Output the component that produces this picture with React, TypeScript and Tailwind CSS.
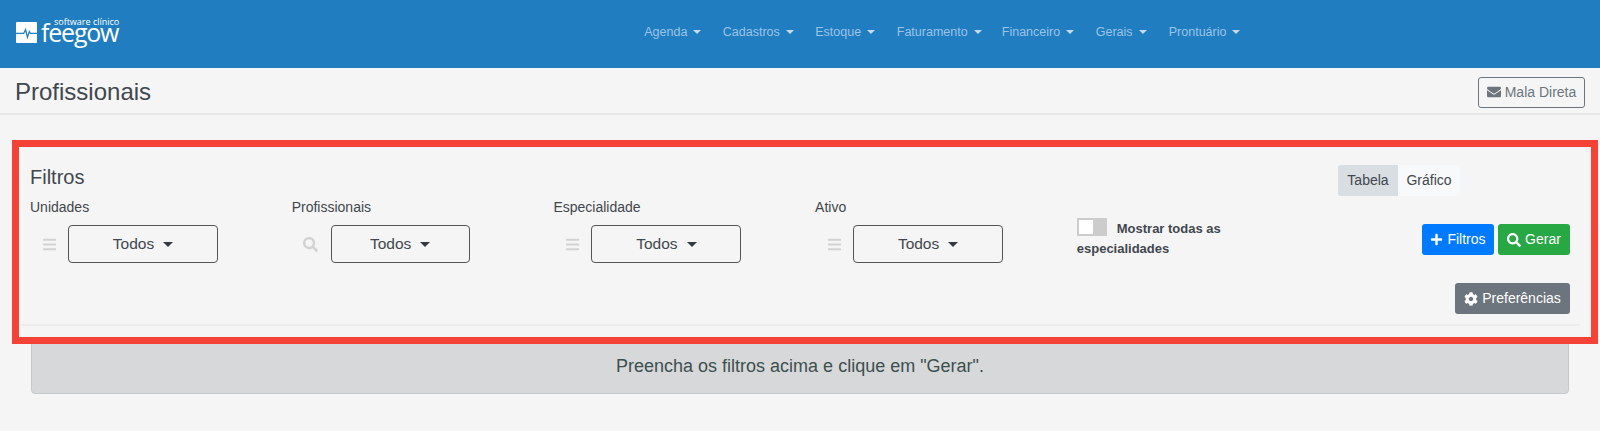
import React from "react";
import { FaBars, FaCog, FaEnvelope, FaPlus, FaSearch } from "react-icons/fa";

const menuItems = [
  { label: "Agenda", width: "w-[78.5px]" },
  { label: "Cadastros", width: "w-[92.5px]" },
  { label: "Estoque", width: "w-[81.5px]" },
  { label: "Faturamento", width: "w-[105px]" },
  { label: "Financeiro", width: "w-[94px]" },
  { label: "Gerais", width: "w-[73px]" },
  { label: "Prontuário", width: "w-[75px]" },
];

const filters = [
  { label: "Unidades", icon: "bars", button: "w-[150px]" },
  { label: "Profissionais", icon: "search", button: "w-[139px]" },
  { label: "Especialidade", icon: "bars", button: "w-[150px]" },
  { label: "Ativo", icon: "bars", button: "w-[150px]" },
];

const FeegowLogo = () => (
  <div className="flex items-center">
    <svg width="21" height="21" viewBox="0 0 22 22" className="mr-[4px] mt-[1px]">
      <rect width="22" height="22" rx="1" fill="#ffffff" />
      <path
        d="M0 12 H8 L10 8 L12 16 L14 10 L15 12 H22"
        fill="none"
        stroke="#207dbf"
        strokeWidth="1.3"
      />
    </svg>
    <div className="mt-[-10px] flex flex-col items-end font-['Open_Sans',sans-serif] text-white">
      <span className="mr-[-1px] block text-[9px] leading-[10px] whitespace-nowrap">
        software clínico
      </span>
      <span className="block text-[25px] leading-[11px] font-normal tracking-[-1.2px]">
        feegow
      </span>
    </div>
  </div>
);

export default function App() {
  return (
    <div className="relative h-[431px] overflow-hidden bg-[#f5f5f5] font-['Liberation_Sans',sans-serif] text-[#41474d]">
      {/* Top bar */}
      <header className="flex h-[68px] items-center bg-[#207dbf] pb-[4px] pl-[16px]">
        <FeegowLogo />
        <nav className="ml-[526px] flex text-[12.5px] text-[#9cc3e8]">
          {menuItems.map((item) => (
            <a key={item.label} className={`flex items-center ${item.width}`}>
              {item.label}
              <span className="ml-[6px] inline-block border-x-[4px] border-t-[4px] border-x-transparent border-t-[#c3daf0]" />
            </a>
          ))}
        </nav>
      </header>

      {/* Page title */}
      <div className="flex h-[47px] items-center justify-between border-b-2 border-[#e7e7e7] px-[15px] pt-[3px]">
        <h1 className="text-[24px] leading-none">Profissionais</h1>
        <button className="flex h-[31px] w-[107px] items-center justify-center gap-[4px] rounded-[3px] border border-[#6c757d] text-[14px] text-[#6c757d]">
          <FaEnvelope className="text-[14px]" />
          Mala Direta
        </button>
      </div>

      <main className="px-[30px]">
        {/* Filters title */}
        <div className="flex h-[81px] items-end justify-between">
          <h2 className="mb-[7px] text-[20px] leading-[24px]">Filtros</h2>
          <div className="mr-[110px] flex h-[31px] text-[14px]">
            <span className="flex w-[60px] items-center justify-center rounded-l-[3px] bg-[#d9dee3]">
              Tabela
            </span>
            <span className="flex w-[62px] items-center justify-center rounded-r-[3px] bg-[#f8f9fa]">
              Gráfico
            </span>
          </div>
        </div>

        {/* Filter row */}
        <div className="flex h-[87px]">
          {filters.map((filter) => (
            <div key={filter.label} className="w-[261.7px] pt-[1px]">
              <label className="block text-[14px] leading-[21px]">{filter.label}</label>
              <div className="mt-[7px] flex items-center">
                <span className="flex w-[38px] justify-center text-[#d2d2d2]">
                  {filter.icon === "bars" ? (
                    <FaBars className="text-[15px]" />
                  ) : (
                    <FaSearch className="text-[15px]" />
                  )}
                </span>
                <button
                  className={`flex h-[38px] items-center justify-center gap-[9px] rounded-[4px] border border-[#555555] text-[15.5px] ${filter.button} ${
                    filter.icon === "search" ? "ml-[1px]" : ""
                  }`}
                >
                  Todos
                  <span className="inline-block border-x-[5px] border-t-[5px] border-x-transparent border-t-[#343a40]" />
                </button>
              </div>
            </div>
          ))}

          <div className="w-[200px] pt-[22px] text-[13px] leading-[20px] font-bold">
            <span className="mr-[10px] inline-flex h-[18px] w-[30px] align-[-1px] bg-[#cccccc] p-[2px]">
              <span className="h-[14px] w-[14px] bg-white" />
            </span>
            Mostrar todas as especialidades
          </div>

          <div className="ml-auto flex gap-[4px] pt-[28px]">
            <button className="flex h-[31px] w-[72px] items-center justify-center gap-[4px] rounded-[3px] bg-[#007bff] text-[14px] text-white">
              <FaPlus className="text-[13px]" />
              Filtros
            </button>
            <button className="flex h-[31px] w-[72px] items-center justify-center gap-[4px] rounded-[3px] bg-[#28a745] text-[14px] text-white">
              <FaSearch className="text-[14px]" />
              Gerar
            </button>
          </div>
        </div>

        <div className="flex justify-end">
          <button className="flex h-[31px] w-[115px] items-center justify-center gap-[4px] rounded-[3px] bg-[#6c757d] text-[14px] text-white">
            <FaCog className="text-[14px]" />
            Preferências
          </button>
        </div>

        <hr className="mx-[-10px] mt-[10px] border-t-2 border-[#ececec]" />

        {/* Empty state */}
        <div className="mx-[1px] mt-[14px] flex h-[54px] items-center justify-center rounded-[4px] border border-[#c6c8ca] bg-[#d6d8d9] pb-[2px] text-[18px] text-[#3d4f4f]">
          Preencha os filtros acima e clique em "Gerar".
        </div>
      </main>

      {/* Annotation frame over the filters */}
      <div className="absolute left-[12px] top-[140px] h-[204px] w-[1586px] border-[7px] border-[#f44336]" />
    </div>
  );
}
